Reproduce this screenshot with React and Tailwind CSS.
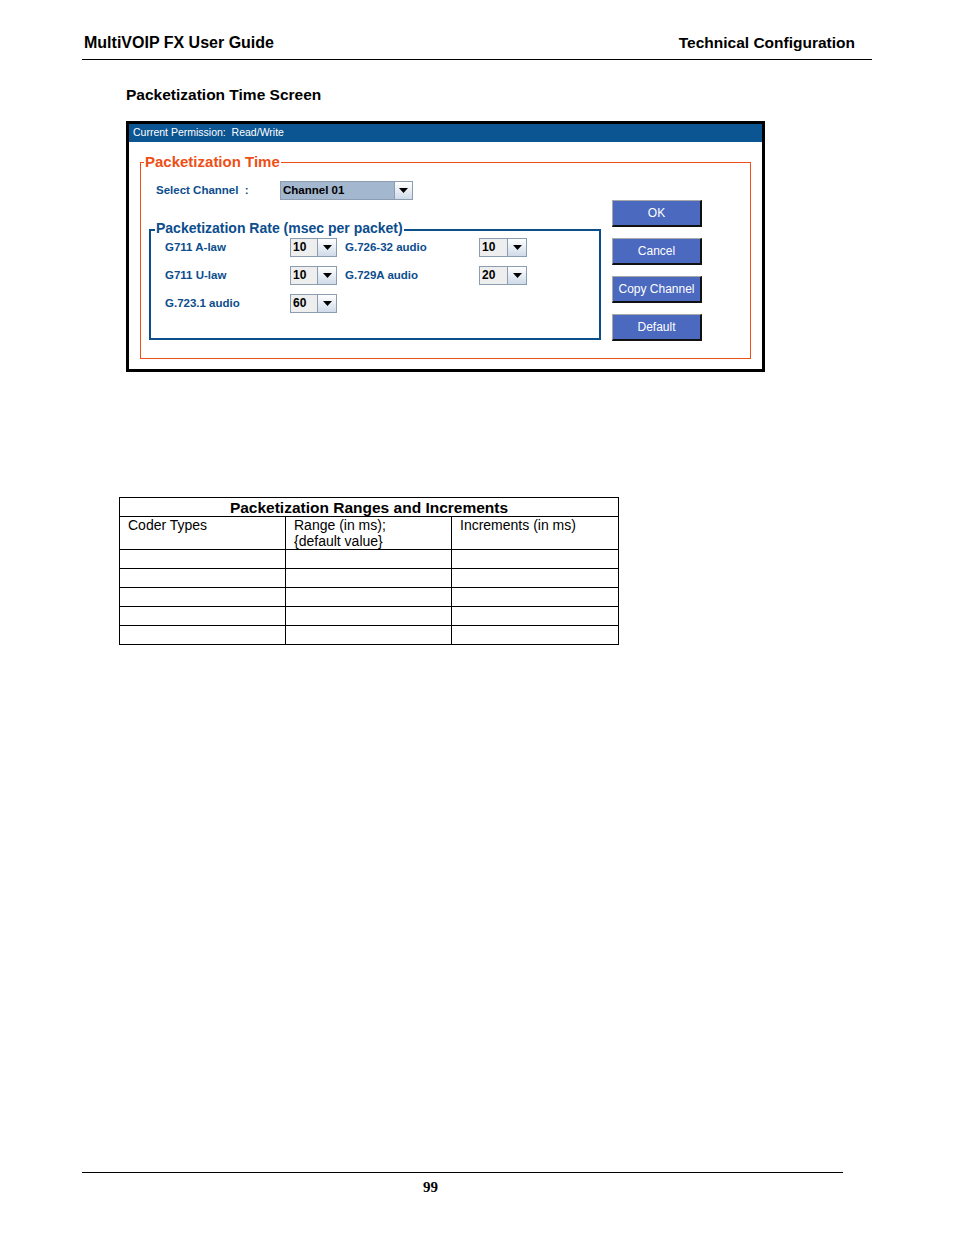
import React from "react";

const Arrow = () => (
  <svg width="9" height="5" viewBox="0 0 9 5">
    <path d="M0 0H9L4.5 5Z" fill="#000" />
  </svg>
);

const Drop = ({ v, w }) => (
  <div className={`flex h-[19px] ${w} border border-[#8c9db2]`}>
    <div className="flex-1 bg-[#eeeeee] pl-[2px] text-[12px] font-bold leading-[17px] text-black">{v}</div>
    <div className="flex w-[19px] items-center justify-center border-l border-[#8c9db2] bg-gradient-to-b from-white to-[#cfdbe9]">
      <Arrow />
    </div>
  </div>
);

const Btn = ({ children }) => (
  <div className="flex h-[27px] w-[90px] items-center justify-center border-t border-l border-t-[#a8a8a8] border-l-[#a8a8a8] border-r-2 border-b-2 border-r-[#111] border-b-[#111] bg-[#4a69bf] text-[12px] text-white">
    {children}
  </div>
);

const Label = ({ children, w }) => (
  <div className={`${w} text-[11.5px] font-bold text-[#0c4d8d]`}>{children}</div>
);

export default function App() {
  return (
    <div className="h-[1235px] w-[954px] bg-white font-['Liberation_Sans',Arial,sans-serif] text-black">
      <div className="ml-[82px] flex w-[790px] justify-between border-b border-black pt-[34px] pb-[7px] text-[16px] font-bold leading-[18px]">
        <span className="pl-[2px]">MultiVOIP FX User Guide</span>
        <span className="pr-[17px] text-[15.5px]">Technical Configuration</span>
      </div>

      <div className="ml-[126px] mt-[26px] text-[15.5px] font-bold leading-[18px]">Packetization Time Screen</div>

      <div className="ml-[126px] mt-[17px] flex h-[251px] w-[639px] flex-col border-[3px] border-black">
        <div className="flex h-[18px] items-center bg-[#0b5592] pl-[4px] text-[10.5px] text-white">
          Current Permission:&nbsp; Read/Write
        </div>
        <div className="flex flex-1 flex-col bg-white px-[11px] pt-[20px] pb-[10px]">
          <div className="relative flex flex-1 border border-[#ee4f16] pl-[8px]">
            <span className="absolute -top-[10px] left-[3px] bg-white px-[1px] text-[15px] font-bold leading-[18px] text-[#ee4f16]">
              Packetization Time
            </span>
            <div className="flex w-[452px] flex-col pt-[18px]">
              <div className="flex h-[19px] items-center">
                <div className="w-[131px] pl-[7px]">
                  <Label w="">Select Channel&nbsp; :</Label>
                </div>
                <div className="flex h-[19px] w-[133px] border border-[#8c9db2]">
                  <div className="flex-1 bg-[#a3b7ce] pl-[2px] text-[11.5px] font-bold leading-[17px] text-black">Channel 01</div>
                  <div className="flex w-[18px] items-center justify-center border-l border-[#8c9db2] bg-gradient-to-b from-white to-[#cfdbe9]">
                    <Arrow />
                  </div>
                </div>
              </div>
              <div className="relative mt-[29px] h-[111px] border-2 border-[#0c4e8a] pt-[7px]">
                <span className="absolute -top-[11px] left-[4px] bg-white px-[1px] text-[14px] font-bold leading-[17px] text-[#0c4d8d]">
                  Packetization Rate (msec per packet)
                </span>
                <div className="flex flex-col gap-[9px]">
                  <div className="flex h-[19px] items-center">
                    <Label w="w-[139px] pl-[14px]">G711 A-law</Label>
                    <Drop v="10" w="w-[47px]" />
                    <Label w="ml-[8px] w-[134px]">G.726-32 audio</Label>
                    <Drop v="10" w="w-[48px]" />
                  </div>
                  <div className="flex h-[19px] items-center">
                    <Label w="w-[139px] pl-[14px]">G711 U-law</Label>
                    <Drop v="10" w="w-[47px]" />
                    <Label w="ml-[8px] w-[134px]">G.729A audio</Label>
                    <Drop v="20" w="w-[48px]" />
                  </div>
                  <div className="flex h-[19px] items-center">
                    <Label w="w-[139px] pl-[14px]">G.723.1 audio</Label>
                    <Drop v="60" w="w-[47px]" />
                  </div>
                </div>
              </div>
            </div>
            <div className="ml-[11px] flex flex-col gap-[11px] pt-[37px]">
              <Btn>OK</Btn>
              <Btn>Cancel</Btn>
              <Btn>Copy Channel</Btn>
              <Btn>Default</Btn>
            </div>
          </div>
        </div>
      </div>

      <table className="ml-[119px] mt-[125px] w-[499px] table-fixed border-collapse text-[14px]">
        <colgroup>
          <col className="w-[166px]" />
          <col className="w-[166px]" />
          <col className="w-[167px]" />
        </colgroup>
        <tbody>
          <tr className="h-[19px]">
            <td colSpan={3} className="border border-black text-center text-[15.5px] font-bold leading-[17px]">
              Packetization Ranges and Increments
            </td>
          </tr>
          <tr className="h-[33px]">
            <td className="border border-black pl-[8px] align-top leading-[16px]">Coder Types</td>
            <td className="border border-black pl-[8px] align-top leading-[16px]">
              Range (in ms);
              <br />
              {"{default value}"}
            </td>
            <td className="border border-black pl-[8px] align-top leading-[16px]">Increments (in ms)</td>
          </tr>
          {[0, 1, 2, 3, 4].map((i) => (
            <tr key={i} className="h-[19px]">
              <td className="border border-black"></td>
              <td className="border border-black"></td>
              <td className="border border-black"></td>
            </tr>
          ))}
        </tbody>
      </table>

      <div className="ml-[82px] mt-[527px] w-[761px] border-t border-black"></div>
      <div className="ml-[423px] mt-[5px] font-['Liberation_Serif','Times_New_Roman',serif] text-[15px] font-bold leading-[18px]">99</div>
    </div>
  );
}
